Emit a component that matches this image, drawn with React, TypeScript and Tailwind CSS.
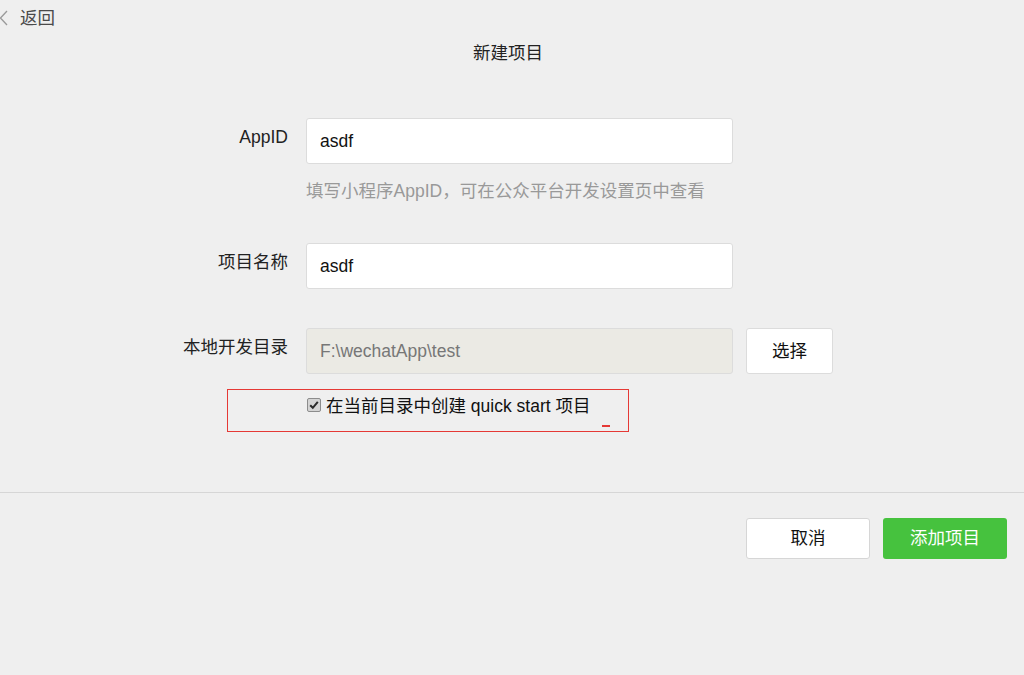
import React from 'react'

const font = { fontFamily: '"Liberation Sans", "Noto Sans CJK SC", sans-serif' }

function Field({ label, value, disabled }: { label: string; value: string; disabled?: boolean }) {
  return (
    <div className="flex">
      <div className="w-[288px] pt-[7px] text-right leading-[24px] text-[#222]">{label}</div>
      <div
        className={
          'ml-[18px] flex h-[46px] w-[427px] items-center rounded-[3px] border border-[#dcdcdc] px-[13px] ' +
          (disabled ? 'bg-[#ebeae4] text-[#777]' : 'bg-white text-[#111]')
        }
      >
        {value}
      </div>
    </div>
  )
}

export default function App() {
  return (
    <div className="h-[675px] w-[1024px] overflow-hidden bg-[#efefef] text-[17.5px]" style={font}>
      <div className="flex h-[36px] items-center">
        <svg width="9" height="16" viewBox="0 0 9 16" className="ml-[-1px]">
          <path d="M8 1 L1.5 8 L8 15" fill="none" stroke="#9a9a9a" strokeWidth="1.3" />
        </svg>
        <span className="ml-[12px] text-[#4a4a4a]">返回</span>
      </div>
      <div className="mt-[5px] pr-[8px] text-center leading-[24px] text-[#222]">新建项目</div>

      <div className="mt-[53px]">
        <Field label="AppID" value="asdf" />
        <div className="ml-[306px] mt-[15px] leading-[24px] text-[#999]">
          填写小程序AppID，可在公众平台开发设置页中查看
        </div>
        <div className="mt-[40px]">
          <Field label="项目名称" value="asdf" />
        </div>
        <div className="mt-[39px] flex">
          <Field label="本地开发目录" value="F:\wechatApp\test" disabled />
          <button className="ml-[13px] h-[46px] w-[87px] rounded-[3px] border border-[#dcdcdc] bg-white text-[#111]">
            选择
          </button>
        </div>

        <div className="relative ml-[227px] mt-[15px] flex h-[43px] w-[402px] border border-[#e53935] pt-[4px]">
          <div className="ml-[79px] mt-[4px] flex h-[14px] w-[14px] items-center justify-center rounded-[2px] border border-[#8c8c8c] bg-[#d4d4d4]">
            <svg width="10" height="10" viewBox="0 0 10 10">
              <path d="M1.2 5.2 L3.8 7.8 L8.8 1.8" fill="none" stroke="#2a2a2a" strokeWidth="2" />
            </svg>
          </div>
          <span className="ml-[5px] leading-[24px] text-[#111]">在当前目录中创建 quick start 项目</span>
          <div className="absolute left-[374px] top-[35px] h-[2px] w-[8px] bg-[#e53935]" />
        </div>
      </div>

      <div className="mt-[60px] h-px bg-[#d6d6d6]" />

      <div className="mt-[25px] flex justify-end gap-[13px] pr-[17px]">
        <button className="h-[41px] w-[124px] rounded-[3px] border border-[#d6d6d6] bg-white text-[#111]">
          取消
        </button>
        <button className="h-[41px] w-[124px] rounded-[3px] bg-[#46c23e] text-white">添加项目</button>
      </div>
    </div>
  )
}
